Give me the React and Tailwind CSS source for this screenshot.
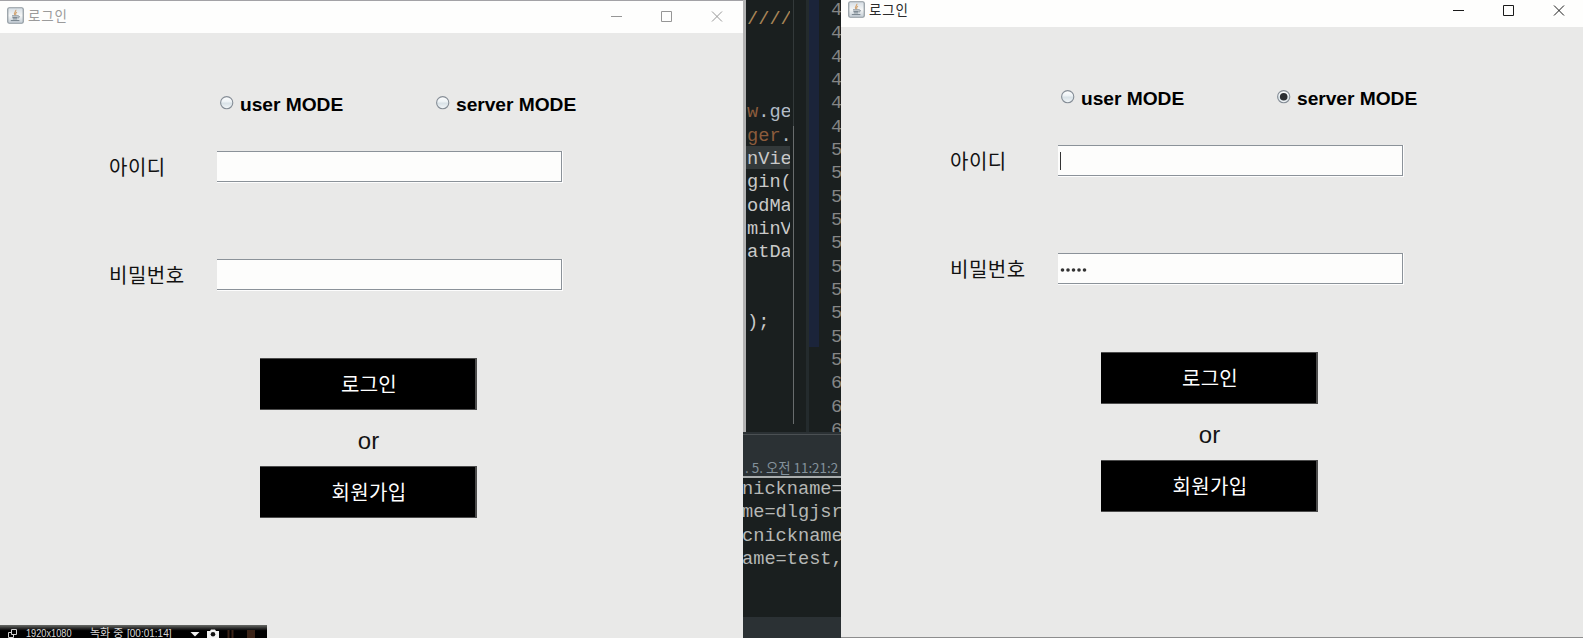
const KR = "font-['Liberation_Sans','Noto_Sans_CJK_KR',sans-serif]";

function JavaIcon() {
  return (
    <svg width="17" height="17" viewBox="0 0 17 17" className="shrink-0">
      <defs>
        <linearGradient id="tile" x1="0" y1="0" x2="0" y2="1">
          <stop offset="0" stopColor="#d5dde4" />
          <stop offset="0.5" stopColor="#f4f6f6" />
          <stop offset="1" stopColor="#c3cdd5" />
        </linearGradient>
      </defs>
      <rect x="0.75" y="0.75" width="15.5" height="15.5" rx="1.5" fill="url(#tile)" stroke="#8f989f" strokeWidth="1.2" />
      <path d="M8.8 2.8C9.6 4.6 6.2 5.4 7.6 8M10 5.2C8.4 6 8.2 6.8 9 8.1" fill="none" stroke="#d3a573" strokeWidth="1.1" />
      <path d="M5 8.9h6.2M5.4 10.6h5.2M5.8 11.9h4.4M3.8 13.6h8.6" fill="none" stroke="#74808a" strokeWidth="1" />
      <path d="M11 9c2-.3 1.8 1.8-.2 2" fill="none" stroke="#74808a" strokeWidth="0.9" />
    </svg>
  );
}

function TitleBar({ active }) {
  return (
    <div
      className={
        active
          ? "flex h-[27px] items-start bg-[#fefefd] pl-[7px] pt-[1px] text-[#2a2a2a]"
          : "flex h-[33px] items-start border-t border-[#a3a2a6] bg-[#fefefd] pl-[7px] pt-[6px] text-[#9b9b9b]"
      }
    >
      <JavaIcon />
      <span className="ml-[4px] w-[560px] text-[13.5px] leading-[20px] tracking-[0.8px]">로그인</span>
      <svg
        width="112"
        height="12"
        viewBox="0 0 112 12"
        fill="none"
        stroke="currentColor"
        strokeWidth="1"
        className={active ? "ml-[24px] mt-[4px] shrink-0 text-[#1a1a1a]" : "ml-[23px] mt-[4px] shrink-0 text-[#969696]"}
      >
        <path d="M0 5.500h11M50.500 0.500h10v10h-10z" />
        <path d="M101 0.500l10 10M111 0.500L101 10.500" />
      </svg>
    </div>
  );
}

function Radio({ label, checked }) {
  return (
    <div className="flex items-start">
      <svg width="14" height="14" viewBox="0 0 14 14" className="mt-[6px] shrink-0">
        <defs>
          <linearGradient id="knob" x1="0" y1="0" x2="0" y2="1">
            <stop offset="0" stopColor="#ffffff" />
            <stop offset="0.4" stopColor="#eef3f6" />
            <stop offset="0.55" stopColor="#d9e2e7" />
            <stop offset="1" stopColor="#f4f8fa" />
          </linearGradient>
        </defs>
        <circle cx="6.7" cy="6.7" r="6.1" fill="url(#knob)" stroke="#858d96" strokeWidth="1.1" />
        {checked && <circle cx="6.7" cy="6.7" r="3.8" fill="#2c2f33" />}
      </svg>
      <span className="ml-[6px] whitespace-nowrap text-[19.2px] font-bold leading-[30px] tracking-[-0.03px] text-black">{label}</span>
    </div>
  );
}

function Field({ label, children }) {
  return (
    <div className="flex h-[32px] items-center pl-[109px]">
      <span className="w-[108px] whitespace-nowrap pt-[2px] text-[20px] leading-[32px] tracking-[0.5px] text-[#111]">{label}</span>
      <div className="h-[32px] w-[346px] border-b border-r border-[#fdfdfd]">
        <div className="flex h-[31px] items-center border-y border-r border-[#8b9299] bg-[#fdfdfc] pl-[2px]">{children}</div>
      </div>
    </div>
  );
}

function ActionButton({ children }) {
  return (
    <div className="ml-[260px] flex h-[52px] w-[217px] items-center justify-center border-b border-r-2 border-t border-[#4c4c4c] bg-black pl-[3px] pt-[2px] text-[20px] leading-none tracking-[0.3px] text-white">
      {children}
    </div>
  );
}

function LoginWindow({ active, className, idField, password }) {
  return (
    <section className={className}>
      <TitleBar active={active} />
      <div className="flex h-[85px] pl-[220px] pt-[57px]">
        <div className="w-[216px]">
          <Radio label="user MODE" />
        </div>
        <Radio label="server MODE" checked={active} />
      </div>
      <div className="mt-[33px] flex flex-col gap-[76px]">
        <Field label="아이디">{idField}</Field>
        <Field label="비밀번호">{password}</Field>
      </div>
      <div className="mt-[67px]">
        <ActionButton>로그인</ActionButton>
        <div className="ml-[260px] h-[56px] w-[217px] text-center text-[24px] leading-[61px] text-[#141414]">or</div>
        <ActionButton>회원가입</ActionButton>
      </div>
    </section>
  );
}

const CODE = [
  ["////", "text-[#a98557]"],
  ["", ""],
  ["", ""],
  ["", ""],
  ["w", "text-[#8c5c3c]", ".ge"],
  ["ger", "text-[#8c5c3c]", "."],
  ["nVie", "text-[#c9c9c9]"],
  ["gin(", "text-[#c9c9c9]"],
  ["odMa", "text-[#c9c9c9]"],
  ["minV", "text-[#c9c9c9]"],
  ["atDa", "text-[#c9c9c9]"],
  ["", ""],
  ["", ""],
  [");", "text-[#c9c9c9]"],
];

const GUTTER = "4444445555555555666".split("");
const LOG = ["nickname=", "me=dlgjsr", "cnickname", "ame=test,"];

function Ide() {
  return (
    <section className="flex h-[638px] w-[98px] shrink-0 flex-col overflow-hidden bg-[#1a1f1f] font-['Liberation_Mono',monospace] text-[18.67px]">
      <div className="flex h-[432px] shrink-0 overflow-hidden">
        <div className="w-[3px] shrink-0 bg-[#b2b2b2]" />
        <div className="w-[44px] shrink-0 overflow-hidden pt-[6px]">
          {CODE.map(([head, tone, tail], i) => (
            <div
              key={i}
              className={
                i === 6
                  ? "h-[23.33px] whitespace-pre bg-[#33393a] pl-[1px] leading-[26.33px]"
                  : "h-[23.33px] whitespace-pre pl-[1px] leading-[26.33px]"
              }
            >
              <span className={tone}>{head}</span>
              {tail && <span className="text-[#b3bcc6]">{tail}</span>}
            </div>
          ))}
        </div>
        <div className="ml-[3px] flex w-px shrink-0 flex-col">
          <div className="h-[126px] bg-[#33393a]" />
          <div className="h-[298px] bg-[#686c6d]" />
        </div>
        <div className="ml-[12px] w-[3px] shrink-0 bg-[#242b2d]" />
        <div className="h-[347px] w-[10px] shrink-0 bg-[#1b243a]" />
        <div className="ml-[12px] w-[10px] shrink-0 overflow-hidden text-[#858686]">
          <div className="-mt-[2px]">
            {GUTTER.map((n, i) => (
              <div key={i} className="h-[23.33px] leading-[24.33px]">
                {n}
              </div>
            ))}
          </div>
        </div>
      </div>
      <div className="h-[44px] shrink-0 bg-[#2b3134] pt-[2px]">
        <div className="h-px bg-[#4b5053]" />
        <div className="mt-[23px] whitespace-pre pl-[2px] font-['Noto_Sans_CJK_KR',sans-serif] text-[13.4px] leading-[18px] text-[#84929b]">. 5. 오전 11:21:2</div>
      </div>
      <div className="h-[141px] shrink-0 border-t-2 border-[#a9adad] text-[#b5b7b5]">
        {LOG.map((line) => (
          <div key={line} className="-ml-px h-[23.33px] whitespace-pre leading-[23.33px]">
            {line}
          </div>
        ))}
      </div>
      <div className="flex-1 bg-[#2b3134]" />
    </section>
  );
}

function RecorderBar() {
  return (
    <div className="absolute left-0 top-[625px] flex h-[13px] w-[267px] items-start overflow-hidden bg-linear-to-b from-[#5f615e] from-5% via-[#151515] via-35% to-black to-50% pl-[8px] pt-[3px] text-[11.5px] leading-[10px] text-[#d8d8d8]">
      <svg width="9" height="9" viewBox="0 0 9 9" fill="none" stroke="#d0d0d0" className="mt-px shrink-0">
        <path d="M3.5.5h5v5h-5zM3 3.5H.5v5h5V6" />
      </svg>
      <span className="ml-[9px] w-[64px] shrink-0">
        <span className="inline-block origin-left scale-x-[0.8] whitespace-nowrap">1920x1080</span>
      </span>
      <span className="w-[37px] shrink-0 whitespace-nowrap text-[11px]">녹화 중</span>
      <span className="w-[63px] shrink-0">
        <span className="inline-block origin-left scale-x-[0.87] whitespace-nowrap">[00:01:14]</span>
      </span>
      <svg width="66" height="9" viewBox="0 0 66 9" className="mt-px shrink-0">
        <path d="M0.500 3h9L5 7.500z" fill="#f0f0f0" />
        <path d="M17 2h3l1-1.500h4l1 1.500h3v7H17z" fill="#f4f4f4" />
        <circle cx="23" cy="5.200" r="2.300" fill="#111" />
        <path d="M37.500 1h2v8h-2zM41.500 1h2v8h-2zM57 1h8v8h-8z" fill="#3b2418" />
      </svg>
    </div>
  );
}

export default function App() {
  return (
    <main className={`${KR} relative flex h-[638px] w-[1583px] overflow-hidden bg-[#e9e9e8]`}>
      <LoginWindow className="h-[638px] w-[743px] shrink-0 bg-[#e9e9e8]" />
      <Ide />
      <LoginWindow
        active
        className="h-[638px] w-[742px] shrink-0 border-b border-[#8d8d8d] bg-[#e9e9e8]"
        idField={<span className="h-[18px] w-px bg-[#333]" />}
        password={
          <svg width="28" height="6" viewBox="0 0 28 6" fill="#333" className="mt-[2px]">
            {[2.5, 8, 13.5, 19, 24.5].map((x) => (
              <circle key={x} cx={x} cy="3" r="1.8" />
            ))}
          </svg>
        }
      />
      <RecorderBar />
    </main>
  );
}
